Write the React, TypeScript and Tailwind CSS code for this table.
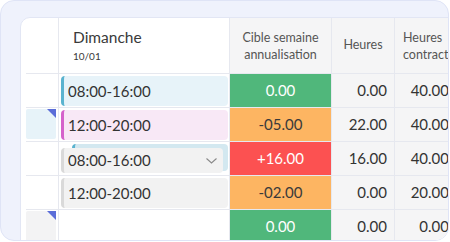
import React from "react"

type Row = {
  flag: "none" | "blue" | "gray"
  shift: React.ReactNode
  target: string
  tone: "green" | "orange" | "red"
  hours: string
  contract: string
}

const toneClass = {
  green: "bg-[#50b77b] text-white",
  orange: "bg-[#fdb562] text-[#3a3a3a]",
  red: "bg-[#fc5151] text-white",
}

const Corner = () => (
  <svg className="absolute right-0 top-0" width="9" height="9" viewBox="0 0 9 9">
    <polygon points="0,0 9,0 9,9" fill="#5b6dd8" />
  </svg>
)

const Shift = ({ time, bar, bg }: { time: string; bar: string; bg: string }) => (
  <div className={`ml-[2px] mr-[1px] mt-[2px] flex h-[30px] items-center rounded-[4px] border-l-[3px] pl-[4px] ${bar} ${bg}`}>
    {time}
  </div>
)

const rows: Row[] = [
  {
    flag: "none",
    shift: <Shift time="08:00-16:00" bar="border-[#5ab3cf]" bg="bg-[#e7f3f9]" />,
    target: "0.00",
    tone: "green",
    hours: "0.00",
    contract: "40.00",
  },
  {
    flag: "blue",
    shift: <Shift time="12:00-20:00" bar="border-[#d562cb]" bg="bg-[#f8e8f6]" />,
    target: "-05.00",
    tone: "orange",
    hours: "22.00",
    contract: "40.00",
  },
  {
    flag: "none",
    shift: (
      <div className="relative ml-[2px] mr-[1px] mt-[2px] h-[30px]">
        <div className="absolute left-[11px] right-0 top-0 h-[27px] rounded-[4px] border-l-[3px] border-[#5ab3cf] bg-[#d3e8f0]" />
        <div className="absolute left-0 right-[5px] top-[4px] flex h-[25px] items-center rounded-[4px] border-l-[3px] border-[#d9d9d9] bg-[#f2f2f2] pl-[4px] pr-[6px]">
          <span className="flex-1">08:00-16:00</span>
          <svg width="11" height="6" viewBox="0 0 11 6" fill="none">
            <path d="M0.5 0.5 L5.5 5 L10.5 0.5" stroke="#8a8a8a" strokeWidth="1.1" />
          </svg>
        </div>
      </div>
    ),
    target: "+16.00",
    tone: "red",
    hours: "16.00",
    contract: "40.00",
  },
  {
    flag: "none",
    shift: <Shift time="12:00-20:00" bar="border-[#d9d9d9]" bg="bg-[#f2f2f2]" />,
    target: "-02.00",
    tone: "orange",
    hours: "0.00",
    contract: "20.00",
  },
  {
    flag: "gray",
    shift: null,
    target: "0.00",
    tone: "green",
    hours: "0.00",
    contract: "0.00",
  },
]

export default function App() {
  return (
    <div className="h-[242px] w-[450px] bg-white font-['Lato',sans-serif] text-[#333]">
      <div className="h-[241px] w-[449px] overflow-hidden rounded-[14px] border border-[#dfe4f6] bg-[#eff2fc] pl-[19px] pt-[16px]">
        <div className="h-[260px] w-[470px] rounded-tl-[10px] border border-[#e2e6f4] bg-white pl-[5px]">
          {/* header */}
          <div className="flex h-[56px]">
            <div className="w-[33px] border-b border-r border-[#e6e8ef]" />
            <div className="w-[171px] border-b border-r border-[#e6e8ef] pl-[14px] pt-[9px]">
              <div className="text-[15.5px] leading-[20px] text-[#3a3a3a]">Dimanche</div>
              <div className="mt-[3px] text-[10px] leading-[12px] text-[#3a3a3a]">10/01</div>
            </div>
            <div className="flex w-[102px] items-center justify-center border-b border-r border-[#e6e8ef] bg-[#f5f5f6] text-center text-[12.5px] leading-[17px] text-[#555]">
              Cible semaine
              <br />
              annualisation
            </div>
            <div className="flex w-[63px] items-center justify-center border-b border-r border-[#e6e8ef] bg-[#f5f5f6] text-[12.5px] text-[#555]">
              Heures
            </div>
            <div className="flex w-[80px] flex-col justify-center border-b border-[#e6e8ef] bg-[#f5f5f6] pl-[8px] text-[12.5px] leading-[17px] text-[#555]">
              <div>Heures</div>
              <div className="whitespace-nowrap">contractuelles</div>
            </div>
          </div>
          {rows.map((r, i) => (
            <div key={i} className="flex h-[34px] text-[15px]">
              <div className="w-[33px] border-b border-r border-[#e6e8ef] pb-[2px] pr-[2px] pt-[1px]">
                {r.flag !== "none" && (
                  <div className={`relative h-full rounded-[2px] ${r.flag === "blue" ? "bg-[#e7f3f9]" : "bg-[#f3f3f4]"}`}>
                    <Corner />
                  </div>
                )}
              </div>
              <div className="w-[171px] border-b border-r border-[#e6e8ef]">{r.shift}</div>
              <div className={`flex w-[102px] items-center justify-center border-b border-r border-[#e6e8ef] ${toneClass[r.tone]}`}>
                {r.target}
              </div>
              <div className="flex w-[63px] items-center justify-end border-b border-r border-[#e6e8ef] bg-[#f5f5f6] pr-[7px]">
                {r.hours}
              </div>
              <div className="flex w-[62px] items-center justify-end border-b border-[#e6e8ef] bg-[#f5f5f6] pr-[8px]">
                {r.contract}
              </div>
            </div>
          ))}
        </div>
      </div>
    </div>
  )
}
